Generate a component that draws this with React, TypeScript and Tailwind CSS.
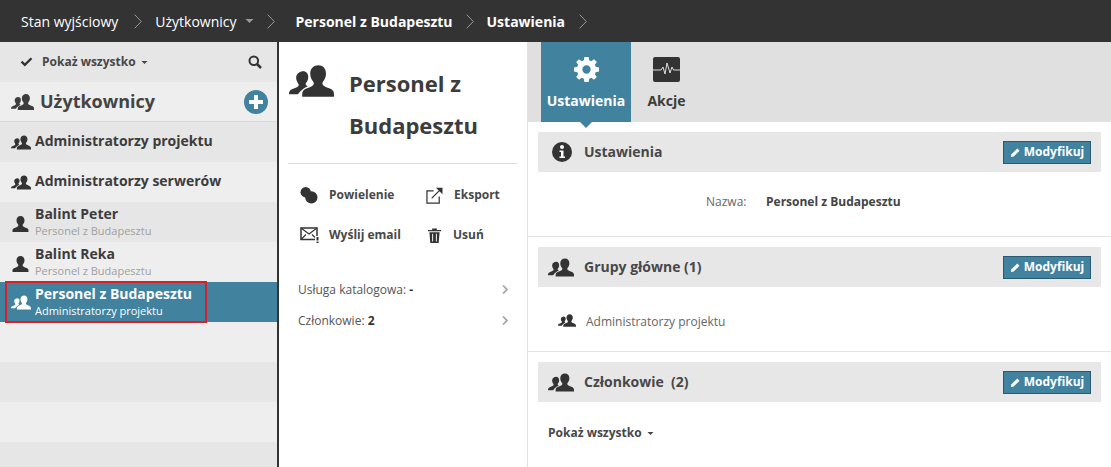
const font = { fontFamily: '"Open Sans", "Noto Sans", sans-serif' };

function Users({ className = "", fill = "#333" }: { className?: string; fill?: string }) {
  return (
    <svg viewBox="0 0 46 32" className={className} fill={fill}>
      <path d="M14.5 6c3.2 0 5.2 2.4 5.2 5.8 0 2.4-.9 4.6-2.2 6-.6.7-.6 1.9.1 2.5.5.4 1 .8 1.6 1.1-2.8 1.4-5.5 3.2-7.7 5.4-.8.8-1.6 1.8-2.3 2.7H0c0-3 1-4.2 3-5.1 2.4-1 5.8-2.1 6.6-3.4.5-.9.4-2-.3-2.8-1.2-1.4-2-3.5-2-5.7C7.300 8.400 11.300 6 14.500 6z" />
      <path d="M30 0c4.700 0 7.800 3.500 7.800 8.300 0 3.400-1.300 6.200-3 8.300-.9 1.100-.9 2.700.1 3.700 1.500 1.400 4.700 2.500 7.500 3.700 2.600 1.100 3.600 3 3.600 5.500V32H13.500v-2.500c0-2.500 1-4.400 3.600-5.500 2.800-1.200 6-2.300 7.500-3.700 1-1 1-2.600.1-3.700-1.700-2.100-3-4.900-3-8.300C21.700 3.500 25.300 0 30 0z" />
    </svg>
  );
}

function User({ className = "", fill = "#333" }: { className?: string; fill?: string }) {
  return (
    <svg viewBox="0 0 32 32" className={className} fill={fill}>
      <path d="M16 0c4.800 0 8 3.500 8 8.300 0 3.400-1.300 6.200-3 8.300-.9 1.100-.9 2.700.1 3.700 1.500 1.400 4.400 2.500 7.200 3.700 2.600 1.100 3.700 3 3.700 5.500V32H0v-2.500c0-2.500 1.100-4.400 3.700-5.500 2.800-1.200 5.700-2.300 7.200-3.700 1-1 1-2.600.1-3.700-1.700-2.100-3-4.900-3-8.300C8 3.500 11.200 0 16 0z" />
    </svg>
  );
}

function Chevron({ className = "", stroke = "#9a9a9a", w = 1 }: { className?: string; stroke?: string; w?: number }) {
  return (
    <svg viewBox="0 0 8 15" className={className} fill="none" stroke={stroke} strokeWidth={w}>
      <path d="M.7 .7l6.600 6.800-6.600 6.800" />
    </svg>
  );
}

function Caret({ className = "", color = "#444" }: { className?: string; color?: string }) {
  return (
    <svg viewBox="0 0 8 4" className={className} fill={color}>
      <path d="M0 0h8L4 4z" />
    </svg>
  );
}

function ModifyButton() {
  return (
    <button className="flex h-[23px] w-[88px] items-center justify-center gap-[3px] border border-[#2a5a73] bg-[#41829f] text-[12px] font-bold text-white">
      <svg viewBox="0 0 12 12" className="h-[11px] w-[11px]" fill="#fff">
        <path d="M1 11l.6-3L8 1.600 10.400 4 4 10.400z" />
      </svg>
      Modyfikuj
    </button>
  );
}

function SectionHead({ icon, title }: { icon: React.ReactNode; title: React.ReactNode }) {
  return (
    <div className="ml-[10px] mr-[10px] mt-[10px] flex h-10 shrink-0 items-center bg-[#e7e7e7] pl-[13px] pr-[10px]">
      <div className="flex w-[33px] shrink-0 items-center">{icon}</div>
      <div className="flex-1 whitespace-pre pb-[2px] text-[14px] font-bold text-[#484848]">{title}</div>
      <ModifyButton />
    </div>
  );
}

type Row = { name: string; sub?: string; kind: "group" | "user"; bg: string; active?: boolean };

const rows: Row[] = [
  { name: "Administratorzy projektu", kind: "group", bg: "bg-[#e6e6e6]" },
  { name: "Administratorzy serwerów", kind: "group", bg: "bg-[#eeeeee]" },
  { name: "Balint Peter", sub: "Personel z Budapesztu", kind: "user", bg: "bg-[#e6e6e6]" },
  { name: "Balint Reka", sub: "Personel z Budapesztu", kind: "user", bg: "bg-[#eeeeee]" },
  { name: "Personel z Budapesztu", sub: "Administratorzy projektu", kind: "group", bg: "bg-[#41829f]", active: true },
];

function ListRow({ r }: { r: Row }) {
  const color = r.active ? "#ffffff" : "#333333";
  return (
    <div className={`flex h-10 shrink-0 items-center ${r.bg}`}>
      <div className="flex w-[35px] shrink-0 justify-center pl-[7px]">
        {r.kind === "group" ? (
          <Users className="mt-[1px] h-[15px] w-[20px]" fill={color} />
        ) : (
          <User className="ml-[-1px] mt-[4px] h-[16px] w-[17px]" fill={color} />
        )}
      </div>
      <div className={`min-w-0 ${r.sub ? "pb-[2px]" : "pb-[4px]"}`}>
        <div className={`text-[14px] font-bold leading-[19px] ${r.active ? "text-white" : "text-[#3c3c3c]"}`}>{r.name}</div>
        {r.sub && (
          <div className={`text-[11px] leading-[15px] ${r.active ? "text-white" : "text-[#a0a0a0]"}`}>{r.sub}</div>
        )}
      </div>
    </div>
  );
}

export default function App() {
  return (
    <div style={font} className="relative flex h-[467px] w-[1111px] flex-col overflow-hidden bg-white">
      <div className="flex h-[42px] shrink-0 items-center bg-[#333333] pl-[21px] text-[14px] text-white">
        <span>Stan wyjściowy</span>
        <Chevron className="ml-[16px] h-[15px] w-[8px]" />
        <span className="ml-[13px]">Użytkownicy</span>
        <Caret className="ml-[8px] h-[4px] w-[9px]" color="#999" />
        <Chevron className="ml-[13px] h-[15px] w-[8px]" />
        <span className="ml-[21px] font-bold">Personel z Budapesztu</span>
        <Chevron className="ml-[13px] h-[15px] w-[8px]" />
        <span className="ml-[13px] font-bold">Ustawienia</span>
        <Chevron className="ml-[14px] h-[15px] w-[8px]" />
      </div>

      <div className="flex min-h-0 flex-1">
        <div className="flex w-[279px] shrink-0 flex-col border-r-2 border-[#333333]">
          <div className="flex h-10 shrink-0 items-center bg-[#e6e6e6] pl-[20px] pr-[15px]">
            <svg viewBox="0 0 14 12" className="h-[10px] w-[13px]" fill="#333">
              <path d="M0 6.500L2 4.500 5 7.500 12 .5 14 2.500 5 11.500z" />
            </svg>
            <span className="ml-[9px] text-[12px] font-bold text-[#484848]">Pokaż wszystko</span>
            <Caret className="ml-[5px] h-[3px] w-[7px]" />
            <svg viewBox="0 0 14 14" className="ml-auto h-[14px] w-[14px]" fill="none" stroke="#333" strokeWidth="2">
              <circle cx="5.800" cy="5.800" r="4.300" />
              <path d="M9 9l4 4" strokeWidth="2.500" />
            </svg>
          </div>
          <div className="flex h-10 shrink-0 items-center border-b border-[#d9d9d9] bg-[#eeeeee] pl-[11px] pr-[9px]">
            <Users className="h-[16px] w-[23px]" fill="#3c3c3c" />
            <span className="ml-[6px] text-[18px] font-bold text-[#444]">Użytkownicy</span>
            <svg viewBox="0 0 24 24" className="ml-auto h-[24px] w-[24px]">
              <circle cx="12" cy="12" r="12" fill="#41829f" />
              <path d="M10 5h4v5h5v4h-5v5h-4v-5H5v-4h5z" fill="#fff" />
            </svg>
          </div>
          {rows.map((r) => (
            <ListRow key={r.name} r={r} />
          ))}
          <div className="h-10 shrink-0 bg-[#eeeeee]" />
          <div className="h-10 shrink-0 bg-[#e6e6e6]" />
          <div className="h-10 shrink-0 bg-[#eeeeee]" />
          <div className="flex-1 bg-[#e6e6e6]" />
        </div>

        <div className="flex w-[249px] shrink-0 flex-col border-r border-[#e0e0e0] pl-[9px] pr-[10px]">
          <div className="flex h-[122px] shrink-0 border-b border-[#dddddd] pt-[20px]">
            <Users className="ml-[1px] mt-[3px] h-[32px] w-[45px] shrink-0" fill="#333" />
            <div className="ml-[15px] text-[22px] font-bold leading-[42px] text-[#3c3c3c]">Personel z Budapesztu</div>
          </div>
          <div className="grid grid-cols-[125px_1fr] pt-[11px] text-[12px] font-bold text-[#484848]">
            <div className="flex h-10 items-center pl-[12px]">
              <svg viewBox="0 0 18 18" className="h-[17px] w-[18px]" fill="#333">
                <circle cx="5.500" cy="5.500" r="5.500" />
                <circle cx="11.500" cy="11" r="6.500" />
              </svg>
              <span className="ml-[11px]">Powielenie</span>
            </div>
            <div className="flex h-10 items-center pl-[13px]">
              <svg viewBox="0 0 18 18" className="h-[17px] w-[17px]" fill="none" stroke="#333" strokeWidth="1.300">
                <path d="M8 4H1v13h13v-7" />
                <path d="M6 12L16 2" />
                <path d="M10.500 .7h7v7z" fill="#333" stroke="none" />
              </svg>
              <span className="ml-[11px]">Eksport</span>
            </div>
            <div className="flex h-10 items-center pl-[12px]">
              <svg viewBox="0 0 19 16" className="h-[16px] w-[19px]" fill="none" stroke="#333" strokeWidth="1.500">
                <path d="M15 12.500H1V1h16v8" />
                <path d="M1 1l8 6 8-6M1 12.500l5-5M12 7.500l3 3" strokeWidth="1.100" />
                <path d="M17.500 10v3.500" strokeWidth="2" />
                <path d="M17.500 14.500v1.500" strokeWidth="2" />
              </svg>
              <span className="ml-[10px]">Wyślij email</span>
            </div>
            <div className="flex h-10 items-center pl-[15px]">
              <svg viewBox="0 0 14 16" className="h-[15px] w-[13px]" fill="#333">
                <path d="M0 2h4.500V.5h5V2H14v1.500H0zM1.500 4.500h11L11.500 16h-9zM4.500 6v8.500h1V6zm4 0v8.500h1V6z" fillRule="evenodd" />
              </svg>
              <span className="ml-[12px]">Usuń</span>
            </div>
          </div>
          <div className="mt-[19px] flex h-[31px] items-center pl-[10px] pr-[9px] text-[12px] text-[#555]">
            <span>Usługa katalogowa: <b className="text-[#333]">-</b></span>
            <Chevron className="ml-auto h-[9px] w-[6px]" stroke="#aaa" w={3} />
          </div>
          <div className="flex h-[31px] items-center pl-[10px] pr-[9px] text-[12px] text-[#555]">
            <span>Członkowie: <b className="text-[#333]">2</b></span>
            <Chevron className="ml-auto h-[9px] w-[6px]" stroke="#aaa" w={3} />
          </div>
        </div>

        <div className="flex min-w-0 flex-1 flex-col">
          <div className="flex h-20 shrink-0 bg-[#e0e0e0] pl-[13px]">
            <div className="relative flex w-[90px] flex-col items-center bg-[#41829f] pt-[15px] text-white">
              <svg viewBox="0 0 24 24" className="h-[25px] w-[25px]" fill="#fff">
                <path
                  fillRule="evenodd"
                  d="M10 0h4l.6 3.200 1.900.8L19.200 2.100 21.900 4.800 20 7.500l.8 1.900L24 10v4l-3.200.6-.8 1.900 1.900 2.700-2.700 2.700L16.500 20l-1.900.8L14 24h-4l-.6-3.200-1.900-.8-2.700 1.900-2.700-2.700L4 16.500l-.8-1.900L0 14v-4l3.200-.6.8-1.900L2.100 4.800 4.800 2.100 7.500 4l1.900-.8zM12 8a4 4 0 100 8 4 4 0 000-8z"
                />
              </svg>
              <span className="mt-[9px] text-[14px] font-bold leading-[20px]">Ustawienia</span>
              <div className="absolute left-1/2 top-full ml-[-6px] h-0 w-0 border-x-[6px] border-t-[6px] border-x-transparent border-t-[#41829f]" />
            </div>
            <div className="flex w-[70px] flex-col items-center pl-[1px] pt-[15px] text-[#3c3c3c]">
              <svg viewBox="0 0 27 25" className="h-[25px] w-[27px]">
                <rect width="27" height="25" rx="2" fill="#333" />
                <path d="M0 13H8L10 10 12 17 14 6 17 16 19 10 20.500 13H27" fill="none" stroke="#ddd" strokeWidth="1" />
              </svg>
              <span className="mt-[9px] text-[14px] font-bold leading-[20px]">Akcje</span>
            </div>
          </div>

          <SectionHead
            title="Ustawienia"
            icon={
              <svg viewBox="0 0 20 20" className="ml-[1px] h-[20px] w-[20px]">
                <circle cx="10" cy="10" r="10" fill="#333" />
                <circle cx="10" cy="5" r="2" fill="#fff" />
                <path d="M7.500 8.500h4v6h1.500v1.500H7.500v-1.500H9V10H7.500z" fill="#fff" />
              </svg>
            }
          />
          <div className="flex h-[65px] shrink-0 items-center border-b border-[#e5e5e5] pb-[4px] pl-[178px] text-[12px]">
            <span className="w-[60px] text-[#666]">Nazwa:</span>
            <span className="font-bold text-[#444]">Personel z Budapesztu</span>
          </div>

          <SectionHead title="Grupy główne (1)" icon={<Users className="ml-[-3px] h-[19px] w-[26px]" />} />
          <div className="flex h-[65px] shrink-0 items-center border-b border-[#e5e5e5] pl-[30px] pt-[6px] text-[12px] text-[#666]">
            <Users className="mb-[3px] h-[13px] w-[18px]" />
            <span className="ml-[10px]">Administratorzy projektu</span>
          </div>

          <SectionHead title="Członkowie  (2)" icon={<Users className="ml-[-3px] h-[19px] w-[26px]" />} />
          <div className="flex h-[60px] shrink-0 items-center pl-[20px] pt-[2px] text-[12px] font-bold text-[#484848]">
            <span>Pokaż wszystko</span>
            <Caret className="ml-[5px] h-[3px] w-[7px]" />
          </div>
        </div>
      </div>

      <div className="pointer-events-none absolute left-[5px] top-[281px] h-[42px] w-[202px] border-2 border-[#d9202a]" />
    </div>
  );
}
